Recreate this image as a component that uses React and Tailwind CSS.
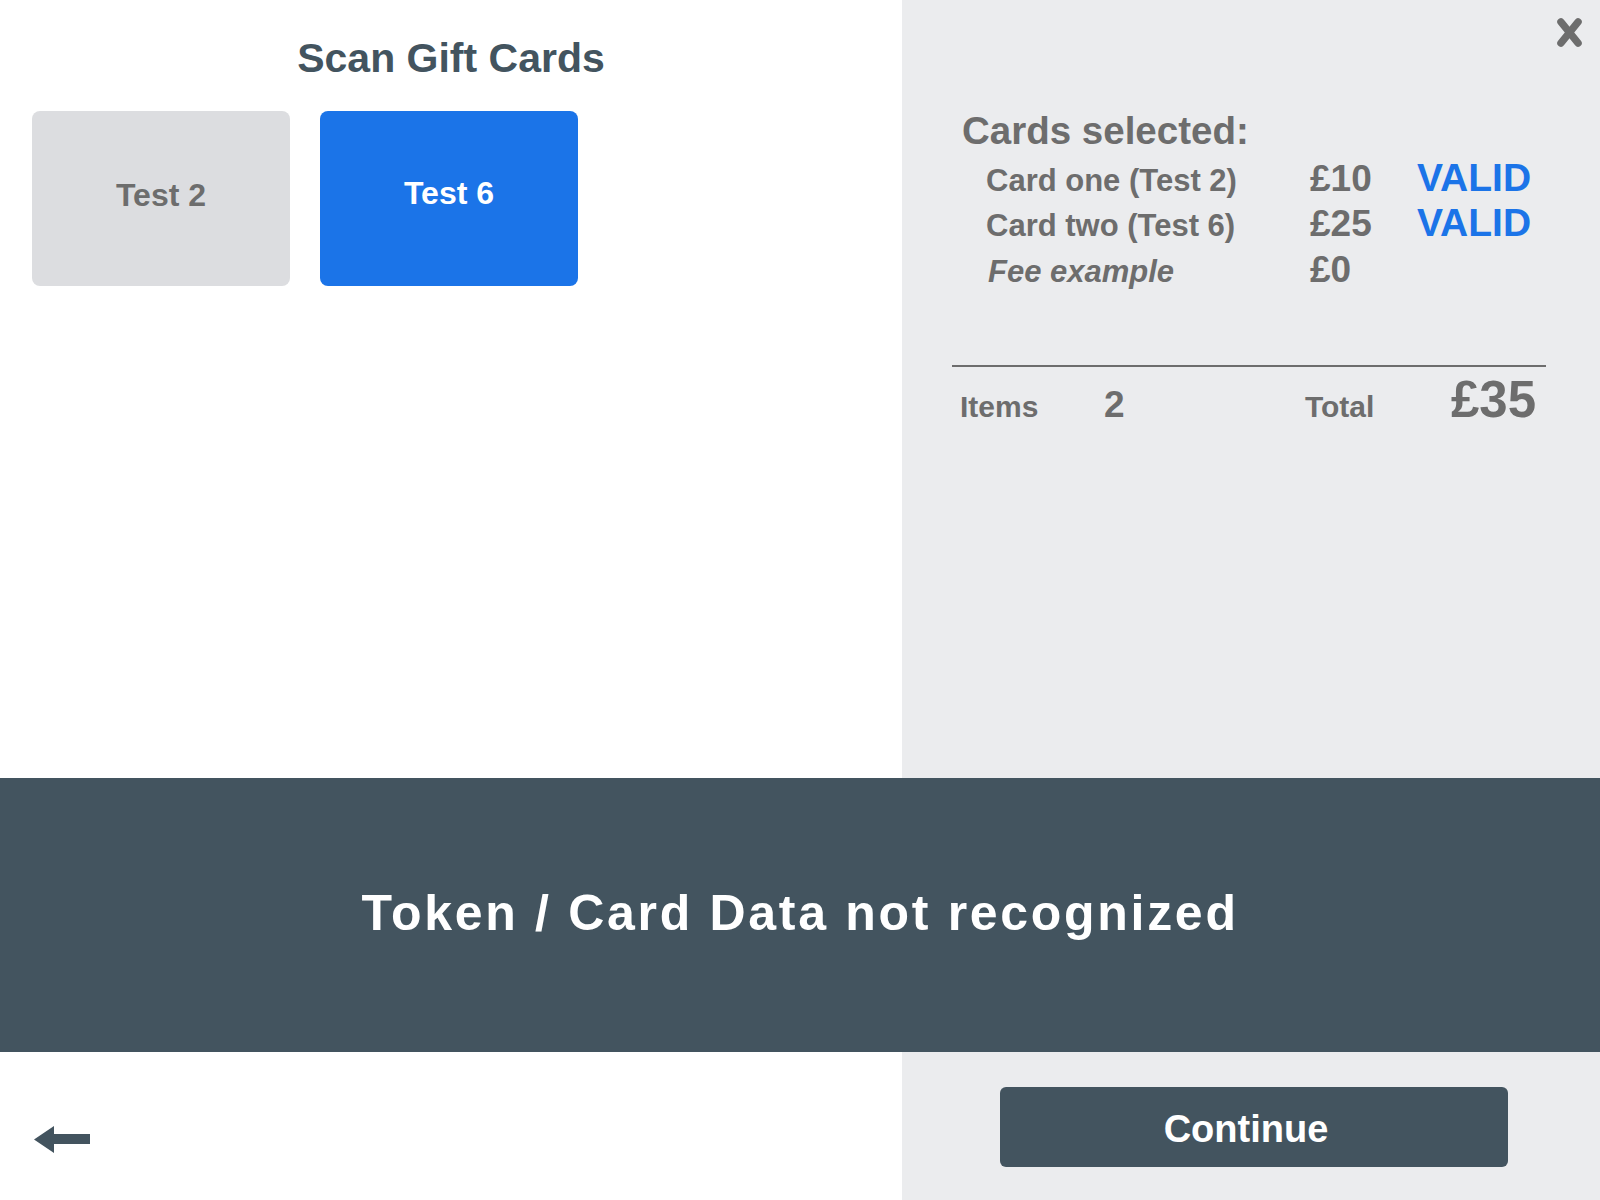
export default function App() {
  return (
    <div className="w-[1600px] h-[1200px] flex flex-col font-['Liberation_Sans',Arial,sans-serif] font-bold overflow-hidden">
      <div className="flex h-[778px]">
        <div className="w-[902px] bg-white flex flex-col">
          <h1 className="mt-[38px] text-center text-[41px] leading-none font-bold text-[#43545f]">Scan Gift Cards</h1>
          <div className="mt-[32px] ml-[32px] flex gap-[30px]">
            <div className="w-[258px] h-[175px] rounded-[8px] bg-[#dcdde0] text-[#6d6d6d] text-[32px] leading-none flex items-center justify-center pb-[7px]">Test 2</div>
            <div className="w-[258px] h-[175px] rounded-[8px] bg-[#1b74e8] text-white text-[32px] leading-none flex items-center justify-center pb-[12px]">Test 6</div>
          </div>
        </div>
        <div className="flex-1 bg-[#ebecee] flex flex-col text-[#6d6d6d]">
          <div className="flex justify-end pt-[18px] pr-[18px]">
            <svg width="25" height="29" viewBox="0 0 25 29">
              <line x1="4" y1="4" x2="21" y2="25" stroke="#6d6d6d" strokeWidth="7.5" strokeLinecap="round" />
              <line x1="21" y1="4" x2="4" y2="25" stroke="#6d6d6d" strokeWidth="7.5" strokeLinecap="round" />
            </svg>
          </div>
          <div className="pl-[50px] pr-[54px] flex flex-col">
            <div className="mt-[65px] ml-[10px] text-[38.5px] leading-none">Cards selected:</div>
            <div className="mt-[7px] ml-[34px] flex flex-col">
              <div className="flex items-baseline leading-none h-[45px]">
                <span className="w-[324px] text-[31px]">Card one (Test 2)</span>
                <span className="w-[107px] text-[37px]">£10</span>
                <span className="text-[39px] text-[#1b74e8]">VALID</span>
              </div>
              <div className="flex items-baseline leading-none h-[48px]">
                <span className="w-[324px] text-[31px]">Card two (Test 6)</span>
                <span className="w-[107px] text-[37px]">£25</span>
                <span className="text-[39px] text-[#1b74e8]">VALID</span>
              </div>
              <div className="flex items-baseline leading-none">
                <span className="w-[324px] text-[31px] italic pl-[2px]">Fee example</span>
                <span className="w-[107px] text-[37px]">£0</span>
              </div>
            </div>
            <div className="mt-[77px] border-t-2 border-[#6d6d6d]" />
            <div className="mt-[7px] pl-[8px] pr-[10px] flex items-baseline leading-none">
              <span className="w-[144px] text-[30px]">Items</span>
              <span className="text-[37px]">2</span>
              <span className="ml-auto w-[146px] text-[30px]">Total</span>
              <span className="text-[51px]">£35</span>
            </div>
          </div>
        </div>
      </div>
      <div className="h-[274px] bg-[#43545f] flex items-center justify-center pb-[5px]">
        <span className="text-white text-[50px] leading-none tracking-[2.7px]">Token / Card Data not recognized</span>
      </div>
      <div className="flex flex-1">
        <div className="w-[902px] bg-white pl-[34px] pt-[74px]">
          <svg width="56" height="27" viewBox="0 0 56 27">
            <polygon points="0,13.5 20,0 20,8 56,8 56,18 20,18 20,27" fill="#43545f" />
          </svg>
        </div>
        <div className="flex-1 bg-[#ebecee] pl-[98px] pt-[35px]">
          <div className="w-[508px] h-[80px] rounded-[6px] bg-[#43545f] text-white text-[38px] leading-none flex items-center justify-center pt-[4px] pr-[16px]">Continue</div>
        </div>
      </div>
    </div>
  );
}
